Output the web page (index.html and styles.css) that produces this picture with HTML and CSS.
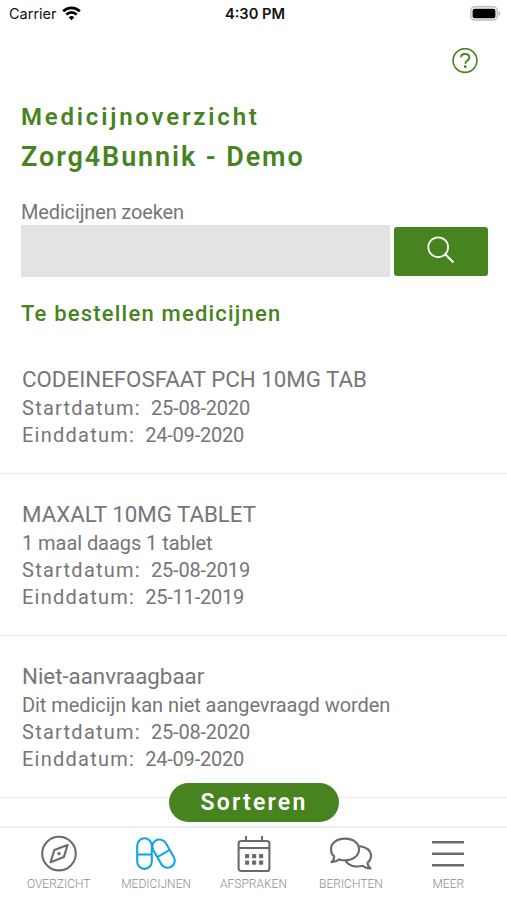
FILE: index.html
```html
<!DOCTYPE html>
<html lang="nl">
<head>
    <meta charset="UTF-8">
    <meta name="viewport" content="width=device-width, initial-scale=1.0">
    <title>Medicijnoverzicht</title>
    <link rel="stylesheet" href="styles.css">
</head>
<body>

    <header class="status-bar">
        <div class="carrier">
            <span>Carrier</span>
            <svg width="19" height="15" viewBox="0 0 19 15" fill="none" stroke="#000" stroke-width="2.7">
                <path d="M1.2 5.3a11.8 11.8 0 0 1 16.6 0"/>
                <path d="M4.3 8.6a7.4 7.4 0 0 1 10.4 0"/>
                <path d="M9.5 14.2L6.7 11.3a4 4 0 0 1 5.6 0z" fill="#000" stroke="none"/>
            </svg>
        </div>
        <div class="time">4:30 PM</div>
        <div class="battery">
            <svg width="31" height="15" viewBox="0 0 31 15">
                <rect x="0.8" y="0.8" width="26.4" height="13.2" rx="3.8" fill="#fff" stroke="#bdbdbd" stroke-width="1.4"/>
                <rect x="2.6" y="2.7" width="22.8" height="9.6" rx="2" fill="#000"/>
                <path d="M28.5 5v5q2-.8 2-2.5t-2-2.5z" fill="#bdbdbd"/>
            </svg>
        </div>
    </header>

    <main class="content">
        <div class="help">
            <svg width="26" height="26" viewBox="0 0 26 26" fill="none" stroke="#47831f" stroke-width="1.6">
                <circle cx="13" cy="12.5" r="11.9"/>
                <path d="M9 9.4C9.1 7.2 10.7 6 13 6c2.5 0 4.3 1.3 4.3 3.4 0 3.2-4 3.1-4 6.3" stroke-width="1.9"/>
                <circle cx="13.2" cy="18.7" r="1.4" fill="#47831f" stroke="none"/>
            </svg>
        </div>

        <h1 class="title">Medicijnoverzicht</h1>
        <h1 class="practice">Zorg4Bunnik - Demo</h1>

        <div class="search-label">Medicijnen zoeken</div>
        <div class="search">
            <div class="search-input"></div>
            <div class="search-button">
                <svg width="28" height="28" viewBox="0 0 28 28" fill="none" stroke="#fff">
                    <circle cx="11.2" cy="11.2" r="9.9" stroke-width="1.7"/>
                    <path d="M18.2 18.2l8.3 8.3" stroke-width="2"/>
                </svg>
            </div>
        </div>

        <h2 class="section-title">Te bestellen medicijnen</h2>

        <ul class="medicines">
            <li class="medicine">
                <div class="name">CODEINEFOSFAAT PCH 10MG TAB</div>
                <div class="line"><span class="label">Startdatum:</span><span class="date">25-08-2020</span></div>
                <div class="line"><span class="label">Einddatum:</span><span class="date">24-09-2020</span></div>
            </li>
            <li class="medicine">
                <div class="name">MAXALT 10MG TABLET</div>
                <div class="line">1 maal daags 1 tablet</div>
                <div class="line"><span class="label">Startdatum:</span><span class="date">25-08-2019</span></div>
                <div class="line"><span class="label">Einddatum:</span><span class="date">25-11-2019</span></div>
            </li>
            <li class="medicine">
                <div class="name">Niet-aanvraagbaar</div>
                <div class="line">Dit medicijn kan niet aangevraagd worden</div>
                <div class="line"><span class="label">Startdatum:</span><span class="date">25-08-2020</span></div>
                <div class="line"><span class="label">Einddatum:</span><span class="date">24-09-2020</span></div>
            </li>
        </ul>
    </main>

    <div class="sort-button">Sorteren</div>

    <nav class="tabs">
        <div class="tab">
            <svg width="40" height="40" viewBox="0 0 40 40" fill="none" stroke="#6b6b6b" stroke-width="2.1" stroke-linejoin="round">
                <circle cx="20" cy="19.6" r="16.8"/>
                <path d="M28.6 11l-3.7 11.9-13.4 5.3 3.8-12.1z"/>
                <circle cx="20" cy="19.6" r="1.7" fill="#6b6b6b" stroke="none"/>
            </svg>
            <span>OVERZICHT</span>
        </div>
        <div class="tab">
            <svg width="42" height="40" viewBox="0 0 42 40" fill="none" stroke="#12a5e8" stroke-width="2.1">
                <rect x="2.2" y="4.3" width="14.6" height="30.6" rx="7.3"/>
                <path d="M2.2 20.5h14.6"/>
                <g transform="rotate(-30 28.5 19.5)">
                    <rect x="21.3" y="4.4" width="14.4" height="30.4" rx="7.2"/>
                    <path d="M21.3 19.5h14.4"/>
                </g>
            </svg>
            <span>MEDICIJNEN</span>
        </div>
        <div class="tab">
            <svg width="40" height="40" viewBox="0 0 40 40" fill="none" stroke="#6b6b6b" stroke-width="2.1">
                <rect x="4.6" y="7" width="30.8" height="30" rx="2.6"/>
                <path d="M4.6 14h30.8M12 1.9v5.1M28 1.9v5.1"/>
                <g fill="#6b6b6b" stroke="none">
                    <rect x="11" y="20" width="4.2" height="4.2" rx=".8"/>
                    <rect x="18" y="20" width="4.2" height="4.2" rx=".8"/>
                    <rect x="25" y="20" width="4.2" height="4.2" rx=".8"/>
                    <rect x="11" y="26.5" width="4.2" height="4.2" rx=".8"/>
                    <rect x="18" y="26.5" width="4.2" height="4.2" rx=".8"/>
                    <rect x="25" y="26.5" width="4.2" height="4.2" rx=".8"/>
                </g>
            </svg>
            <span>AFSPRAKEN</span>
        </div>
        <div class="tab">
            <svg width="44" height="40" viewBox="0 0 44 40" fill="none" stroke="#6b6b6b" stroke-width="2.1" stroke-linejoin="round">
                <path d="M16 4.6c8.2 0 14 4.6 14 10.8S24.2 26.3 16 26.3c-2 0-3.9-.3-5.6-.9-1.7 1.5-4.1 2.5-7.9 2.7 2.2-1.6 2.9-3.3 2.6-5.7C3 20.5 2 18.3 2 15.4 2 9.2 7.8 4.6 16 4.6z"/>
                <path d="M30 12.2c7.3.3 12 4.3 12 9.8 0 3-1.2 5.1-3.4 6.9-.2 2.3.8 4 3 5.6-3.5 0-6.2-1-8.1-2.7-7.8 2-14.8-.6-17.2-5.5"/>
            </svg>
            <span>BERICHTEN</span>
        </div>
        <div class="tab">
            <svg width="34" height="40" viewBox="0 0 34 40" stroke="#6b6b6b" stroke-width="2.6">
                <path d="M1 8.3h32M1 19.8h32M1 31.3h32"/>
            </svg>
            <span>MEER</span>
        </div>
    </nav>

</body>
</html>
```

FILE: styles.css
```css
* {
    box-sizing: border-box;
}
body {
    display: flex;
    flex-direction: column;
    height: 900px;
    margin: 0;
    overflow: hidden;
    background-color: #fff;
    color: #767676;
    font-family: Roboto, "Liberation Sans", sans-serif;
    font-size: 20px;
}
svg {
    display: block;
}
.status-bar {
    display: grid;
    grid-template-columns: 1fr auto 1fr;
    align-items: center;
    height: 27px;
    padding: 0 6px 0 9px;
    color: #111;
    font-family: Inter, sans-serif;
}
.carrier {
    display: flex;
    align-items: center;
    gap: 5px;
    font-size: 14.5px;
}
.time {
    font-size: 14.7px;
    font-weight: 600;
}
.battery {
    justify-self: end;
}
.content {
    height: 799px;
    overflow: hidden;
}
.help {
    display: flex;
    justify-content: flex-end;
    padding: 21px 29px 0 0;
}
.title, .practice, .section-title {
    margin: 0 21px;
    color: #47831f;
    white-space: nowrap;
}
.title {
    margin-top: 23px;
    font-size: 24px;
    font-weight: 600;
    line-height: 40px;
    letter-spacing: 2.8px;
}
.practice {
    font-size: 27px;
    font-weight: 600;
    line-height: 40px;
    letter-spacing: 1.9px;
}
.search-label {
    margin: 23px 21px 0;
    line-height: 24px;
    letter-spacing: -0.15px;
}
.search {
    display: flex;
    gap: 4px;
    margin: 1px 19px 0 21px;
}
.search-input {
    width: 369px;
    height: 52px;
    background-color: #e3e3e3;
}
.search-button {
    display: flex;
    justify-content: center;
    width: 94px;
    height: 49px;
    margin-top: 2px;
    padding-top: 9px;
    border-radius: 3px;
    background-color: #47831f;
}
.section-title {
    margin-top: 22px;
    font-size: 22px;
    font-weight: 500;
    line-height: 30px;
    letter-spacing: 1.2px;
}
.medicines {
    margin: 10px 0 0;
    padding: 0;
    list-style: none;
}
.medicine {
    padding: 26px 22px 24px;
    border-bottom: 1px solid #e9e9e9;
    white-space: nowrap;
}
.name {
    margin-bottom: 2px;
    font-size: 22.3px;
    line-height: 28px;
}
.line {
    display: flex;
    gap: 10px;
    line-height: 27px;
    letter-spacing: -0.06px;
}
.label {
    letter-spacing: 1.25px;
}
.date {
    letter-spacing: -0.2px;
}
.sort-button {
    position: absolute;
    top: 783px;
    left: 169px;
    width: 170px;
    height: 39px;
    border-radius: 20px;
    background-color: #47831f;
    color: #fff;
    font-size: 23px;
    font-weight: 600;
    line-height: 40px;
    letter-spacing: 2.2px;
    text-align: center;
}
.tabs {
    display: flex;
    height: 74px;
    padding: 6px 10px 0;
    border-top: 2px solid #eee;
}
.tab {
    display: flex;
    flex: 1;
    flex-direction: column;
    align-items: center;
    color: #8c8c8c;
    font-size: 12px;
    font-weight: 300;
    line-height: 20px;
}
```
